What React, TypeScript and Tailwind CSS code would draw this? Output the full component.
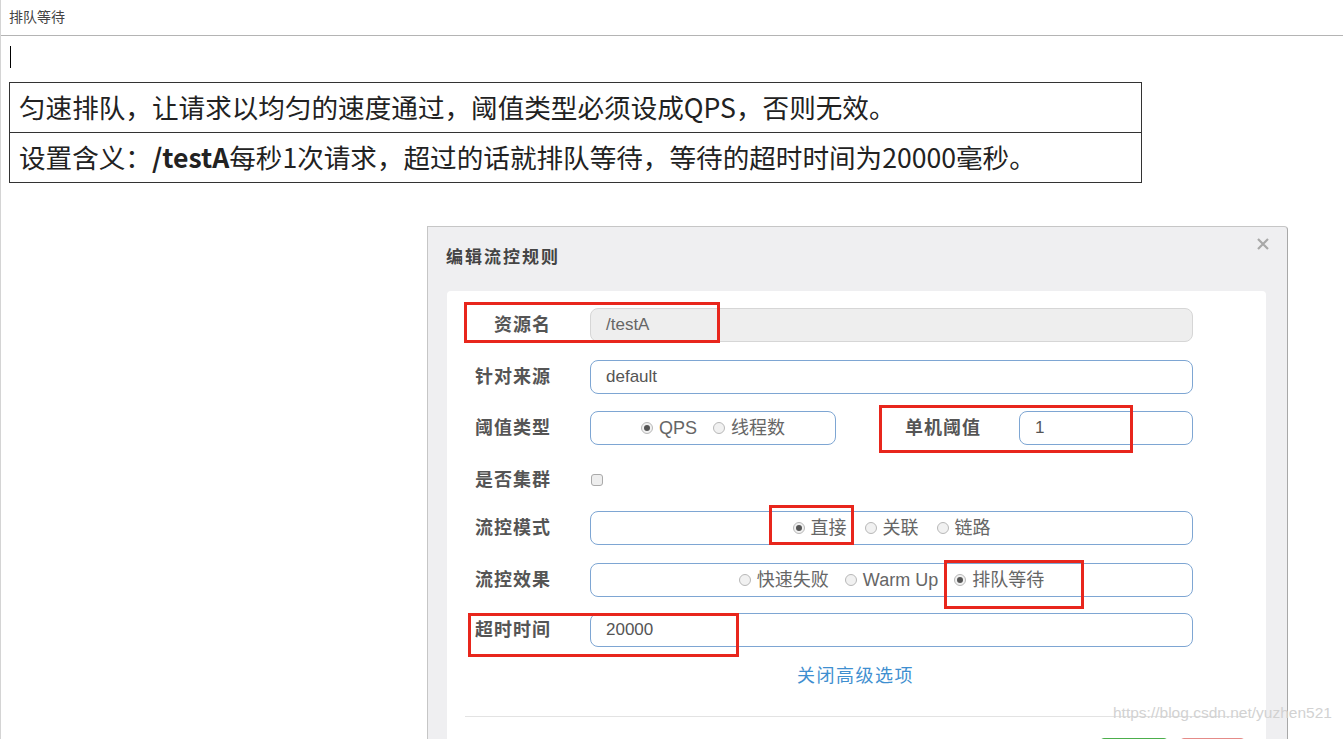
import React from "react";

const Radio = ({ checked, label }: { checked?: boolean; label: string }) => (
  <span className="inline-flex items-center gap-[6px]">
    <span className="w-[12px] h-[12px] rounded-full border border-[#b8b8b8] bg-[#f1f1f1] flex items-center justify-center">
      {checked && <span className="w-[6px] h-[6px] rounded-full bg-[#555]" />}
    </span>
    <span className="text-[18px] text-[#666] leading-none">{label}</span>
  </span>
);

const Label = ({ children, w = "w-[104px]" }: { children: React.ReactNode; w?: string }) => (
  <div className={`${w} shrink-0 text-right text-[18px] tracking-[1px] font-bold text-[#555] leading-none`}>{children}</div>
);

const inputCls =
  "h-[34px] rounded-[8px] border border-[#7ea6d3] bg-white flex items-center pl-[15px] text-[17px] text-[#555]";

const RedBox = ({ cls }: { cls: string }) => (
  <div className={`absolute border-[3px] border-[#e8261c] ${cls}`} />
);

export default function App() {
  return (
    <div className="relative w-[1343px] h-[739px] overflow-hidden bg-white border-l border-[#d4d4d4] font-['Liberation_Sans','Noto_Sans_CJK_SC',sans-serif]">
      {/* header */}
      <div className="h-[36px] flex items-center pl-[8px] border-b border-[#b4b4b4] text-[14px] text-[#444]">
        排队等待
      </div>
      <div className="ml-[9px] mt-[10px] w-[1px] h-[22px] bg-black" />

      {/* table */}
      <div className="ml-[8px] mt-[14px] w-[1133px] border border-[#333] text-[26.6px] text-[#222] font-['Noto_Sans_CJK_SC',sans-serif]">
        <div className="h-[50px] flex items-center pl-[9px] border-b border-[#333] leading-none">
          匀速排队，让请求以均匀的速度通过，阈值类型必须设成QPS，否则无效。
        </div>
        <div className="h-[49px] flex items-center pl-[9px] leading-none">
          设置含义：<span className="font-semibold">/testA</span>每秒1次请求，超过的话就排队等待，等待的超时时间为20000毫秒。
        </div>
      </div>

      {/* modal */}
      <div className="ml-[426px] mt-[43px] w-[861px] h-[600px] border border-b-0 border-[#c6c6c6] border-r-[#a8a8a8] rounded-tr-[4px] bg-[#efeff1]">
        <div className="h-[64px] flex items-center justify-between pl-[18px] pr-[17px]">
          <div className="text-[17px] tracking-[2px] font-bold text-[#444] leading-none mt-[-4px]">编辑流控规则</div>
          <svg width="14" height="14" viewBox="0 0 14 14" className="mt-[-30px]">
            <path d="M2 2 L12 12 M12 2 L2 12" stroke="#a8a8a8" strokeWidth="2.2" />
          </svg>
        </div>
        <div className="ml-[19px] w-[819px] h-[540px] bg-white rounded-t-[4px] pt-[17px]">
          {/* row 1 */}
          <div className="flex items-center h-[34px]">
            <Label>资源名</Label>
            <div className={`ml-[39px] w-[603px] ${inputCls} !bg-[#eeeeee] !border-[#d6d6d6] !text-[#666]`}>/testA</div>
          </div>
          {/* row 2 */}
          <div className="flex items-center h-[34px] mt-[18px]">
            <Label>针对来源</Label>
            <div className={`ml-[39px] w-[603px] ${inputCls}`}>default</div>
          </div>
          {/* row 3 */}
          <div className="flex items-center h-[34px] mt-[17px]">
            <Label>阈值类型</Label>
            <div className="ml-[39px] w-[246px] h-[34px] rounded-[8px] border border-[#7ea6d3] flex items-center justify-center gap-[16px]">
              <Radio checked label="QPS" />
              <Radio label="线程数" />
            </div>
            <Label w="w-[145px]">单机阈值</Label>
            <div className={`ml-[38px] w-[174px] ${inputCls}`}>1</div>
          </div>
          {/* row 4 */}
          <div className="flex items-center h-[34px] mt-[18px]">
            <Label>是否集群</Label>
            <div className="ml-[40px] w-[12px] h-[12px] rounded-[3px] border border-[#aaa] bg-[#eee]" />
          </div>
          {/* row 5 */}
          <div className="flex items-center h-[34px] mt-[14px]">
            <Label>流控模式</Label>
            <div className="ml-[39px] w-[603px] h-[34px] rounded-[8px] border border-[#7ea6d3] flex items-center justify-center gap-[18px]">
              <Radio checked label="直接" />
              <Radio label="关联" />
              <Radio label="链路" />
            </div>
          </div>
          {/* row 6 */}
          <div className="flex items-center h-[34px] mt-[18px]">
            <Label>流控效果</Label>
            <div className="ml-[39px] w-[603px] h-[34px] rounded-[8px] border border-[#7ea6d3] flex items-center justify-center gap-[16px]">
              <Radio label="快速失败" />
              <Radio label="Warm Up" />
              <Radio checked label="排队等待" />
            </div>
          </div>
          {/* row 7 */}
          <div className="flex items-center h-[34px] mt-[16px]">
            <Label>超时时间</Label>
            <div className={`ml-[39px] w-[603px] ${inputCls}`}>20000</div>
          </div>
          {/* link */}
          <div className="h-[24px] mt-[17px] flex items-center pl-[350px] text-[18px] tracking-[1.5px] text-[#3f8fd0] leading-none">
            关闭高级选项
          </div>
          <div className="mx-[18px] mt-[28px] border-t border-[#e3e3e3]" />
          <div className="flex justify-end gap-[12px] mr-[21px] mt-[21px]">
            <div className="w-[68px] h-[34px] rounded-[4px] bg-[#5cb85c] border border-[#4cae4c]" />
            <div className="w-[65px] h-[34px] rounded-[4px] bg-[#d9534f] border border-[#d43f3a] opacity-60" />
          </div>
        </div>
      </div>

      {/* red highlight boxes */}
      <RedBox cls="left-[463px] top-[302px] w-[256px] h-[41px]" />
      <RedBox cls="left-[878px] top-[405px] w-[254px] h-[48px]" />
      <RedBox cls="left-[768px] top-[505px] w-[85px] h-[40px]" />
      <RedBox cls="left-[943px] top-[560px] w-[140px] h-[49px]" />
      <RedBox cls="left-[467px] top-[613px] w-[271px] h-[44px]" />

      {/* watermark */}
      <div className="absolute left-[1112px] top-[705px] text-[15.5px] text-[#d2d2d2] leading-none whitespace-nowrap">
        https://blog.csdn.net/yuzhen521
      </div>
    </div>
  );
}
